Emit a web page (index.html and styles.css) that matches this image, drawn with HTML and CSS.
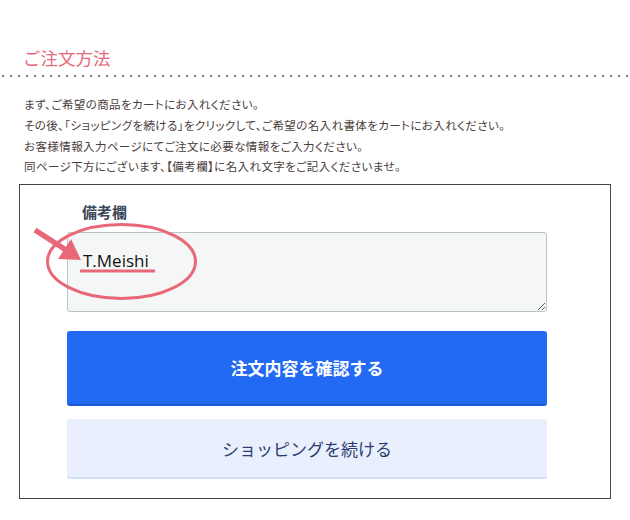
FILE: index.html
```html
<!DOCTYPE html>
<html lang="ja">
<head>
<meta charset="utf-8">
<link rel="stylesheet" href="styles.css">
</head>
<body>
<section class="order">
  <h2 class="order-title">ご注文方法</h2>
  <div class="dots"></div>
  <p class="order-text">まず、ご希望の商品をカートにお入れください。<br>その後、「ショッピングを続ける」をクリックして、ご希望の名入れ書体をカートにお入れください。<br>お客様情報入力ページにてご注文に必要な情報をご入力ください。<br>同ページ下方にございます、【備考欄】に名入れ文字をご記入くださいませ。</p>
  <div class="sample">
    <div class="form">
      <label class="field-label">備考欄</label>
      <textarea class="field">T.Meishi</textarea>
      <button class="btn btn-primary">注文内容を確認する</button>
      <button class="btn btn-secondary">ショッピングを続ける</button>
    </div>
    <svg class="annot" width="200" height="130" viewBox="0 0 200 130">
      <ellipse cx="101.5" cy="76.5" rx="74" ry="37" fill="none" stroke="#e96878" stroke-width="3"/>
      <line x1="15" y1="45" x2="46" y2="65" stroke="#e96878" stroke-width="5.5"/>
      <polygon points="61,75 38,74 51,54" fill="#e96878"/>
      <line x1="60" y1="86" x2="135" y2="86" stroke="#e96878" stroke-width="3"/>
    </svg>
  </div>
</section>
</body>
</html>
```

FILE: styles.css
```css
html, body {
  margin: 0;
  padding: 0;
  background: #fff;
}
body {
  font-family: "Noto Sans CJK JP", "Noto Sans", sans-serif;
}
.order {
  padding-top: 45px;
}
.order-title {
  margin: 0;
  padding-left: 23px;
  font-size: 17.5px;
  font-weight: 400;
  line-height: 26px;
  color: #e8687c;
}
.dots {
  margin-top: 3px;
  height: 4px;
  background-image: radial-gradient(circle, #808080 1.1px, transparent 1.5px);
  background-size: 8px 4px;
  background-position: -1px 0;
}
.order-text {
  margin: 16px 0 0;
  padding-left: 24px;
  font-size: 11.5px;
  line-height: 20.8px;
  color: #4b403c;
  font-feature-settings: "palt";
  letter-spacing: 0.4px;
}
.sample {
  position: relative;
  margin: 7px 19px 0;
  border: 1px solid #4c4340;
  padding: 17px 0 19px 47px;
}
.form {
  width: 480px;
  display: flex;
  flex-direction: column;
}
.field-label {
  padding-left: 15px;
  font-size: 15px;
  font-weight: 700;
  line-height: 20px;
  color: #3b4858;
  margin-bottom: 10px;
}
.field {
  box-sizing: border-box;
  width: 480px;
  height: 80px;
  margin: 0;
  padding: 16px 15px 0;
  border: 1px solid #b9c5cd;
  border-radius: 3px;
  background: #f5f7f7;
  font-family: "Open Sans", "Noto Sans", sans-serif;
  font-size: 17px;
  line-height: 24px;
  color: #111;
  resize: vertical;
  outline: none;
}
.btn {
  box-sizing: border-box;
  width: 480px;
  border: 0;
  border-radius: 3px;
  font-family: "Noto Sans CJK JP", "Noto Sans", sans-serif;
  font-size: 17px;
  padding: 0;
  cursor: pointer;
}
.btn-primary {
  margin-top: 19px;
  height: 75px;
  background: #2269f3;
  border-bottom: 2px solid #1c5ad6;
  color: #fff;
  font-weight: 700;
}
.btn-secondary {
  margin-top: 13px;
  height: 60px;
  background: #e9effd;
  border-bottom: 2px solid #d3dff8;
  color: #2a3d70;
  font-weight: 400;
}
.annot {
  position: absolute;
  left: 0;
  top: 0;
  pointer-events: none;
}
```
